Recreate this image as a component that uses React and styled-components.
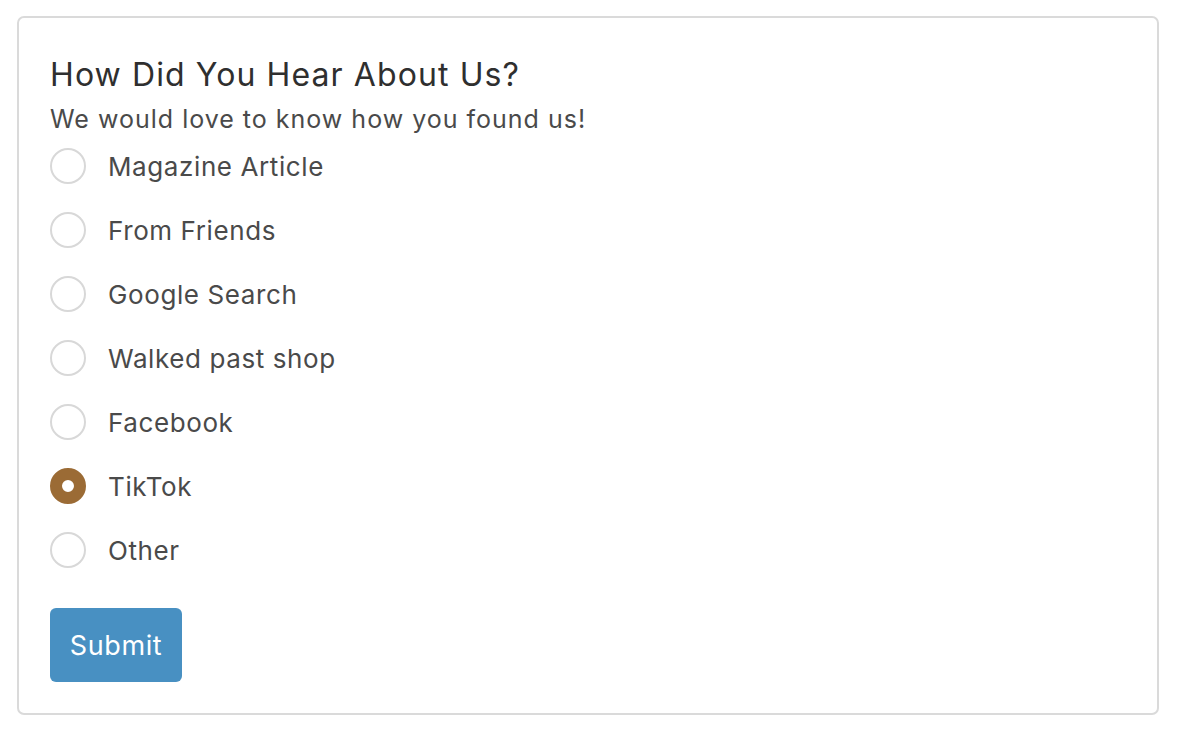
import React, { useState } from "react";
import styled, { createGlobalStyle } from "styled-components";

const GlobalStyle = createGlobalStyle`
  body {
    margin: 0;
    background: #ffffff;
    font-family: Inter, "Open Sans", "Liberation Sans", sans-serif;
  }
`;

const Card = styled.form`
  margin: 16px 19px 0 17px;
  border: 2px solid #dadada;
  border-radius: 7px;
  padding: 39px 32px 31px 31px;
  display: flex;
  flex-direction: column;
`;

const Title = styled.h2`
  margin: 0;
  font-size: 32px;
  line-height: 36px;
  font-weight: 400;
  letter-spacing: 1.1px;
  color: #2f2f2f;
`;

const Subtitle = styled.p`
  margin: 11px 0 14px;
  font-size: 25px;
  line-height: 30px;
  letter-spacing: 1px;
  color: #4a4a4a;
`;

const Options = styled.div`
  display: flex;
  flex-direction: column;
  gap: 28px;
`;

const Row = styled.label`
  display: flex;
  align-items: center;
  gap: 22px;
  height: 36px;
  cursor: pointer;
  font-size: 26px;
  letter-spacing: 0.6px;
  color: #4a4a4a;
`;

const Radio = styled.span`
  box-sizing: border-box;
  width: 36px;
  height: 36px;
  border-radius: 50%;
  flex-shrink: 0;
  border: ${(p) => (p.checked ? "12px solid #9b6b35" : "2px solid #d8d8d8")};
  background: #ffffff;
`;

const Submit = styled.button`
  margin-top: 40px;
  align-self: flex-start;
  width: 132px;
  height: 74px;
  border: 0;
  border-radius: 6px;
  background: #4890c2;
  color: #ffffff;
  font-family: inherit;
  font-size: 27px;
  letter-spacing: 0.6px;
  cursor: pointer;
`;

const options = [
  "Magazine Article",
  "From Friends",
  "Google Search",
  "Walked past shop",
  "Facebook",
  "TikTok",
  "Other",
];

export default function App() {
  const [picked, setPicked] = useState("TikTok");
  return (
    <>
      <GlobalStyle />
      <Card onSubmit={(e) => e.preventDefault()}>
        <Title>How Did You Hear About Us?</Title>
        <Subtitle>We would love to know how you found us!</Subtitle>
        <Options>
          {options.map((o) => (
            <Row key={o} onClick={() => setPicked(o)}>
              <Radio checked={picked === o} />
              {o}
            </Row>
          ))}
        </Options>
        <Submit type="submit">Submit</Submit>
      </Card>
    </>
  );
}
